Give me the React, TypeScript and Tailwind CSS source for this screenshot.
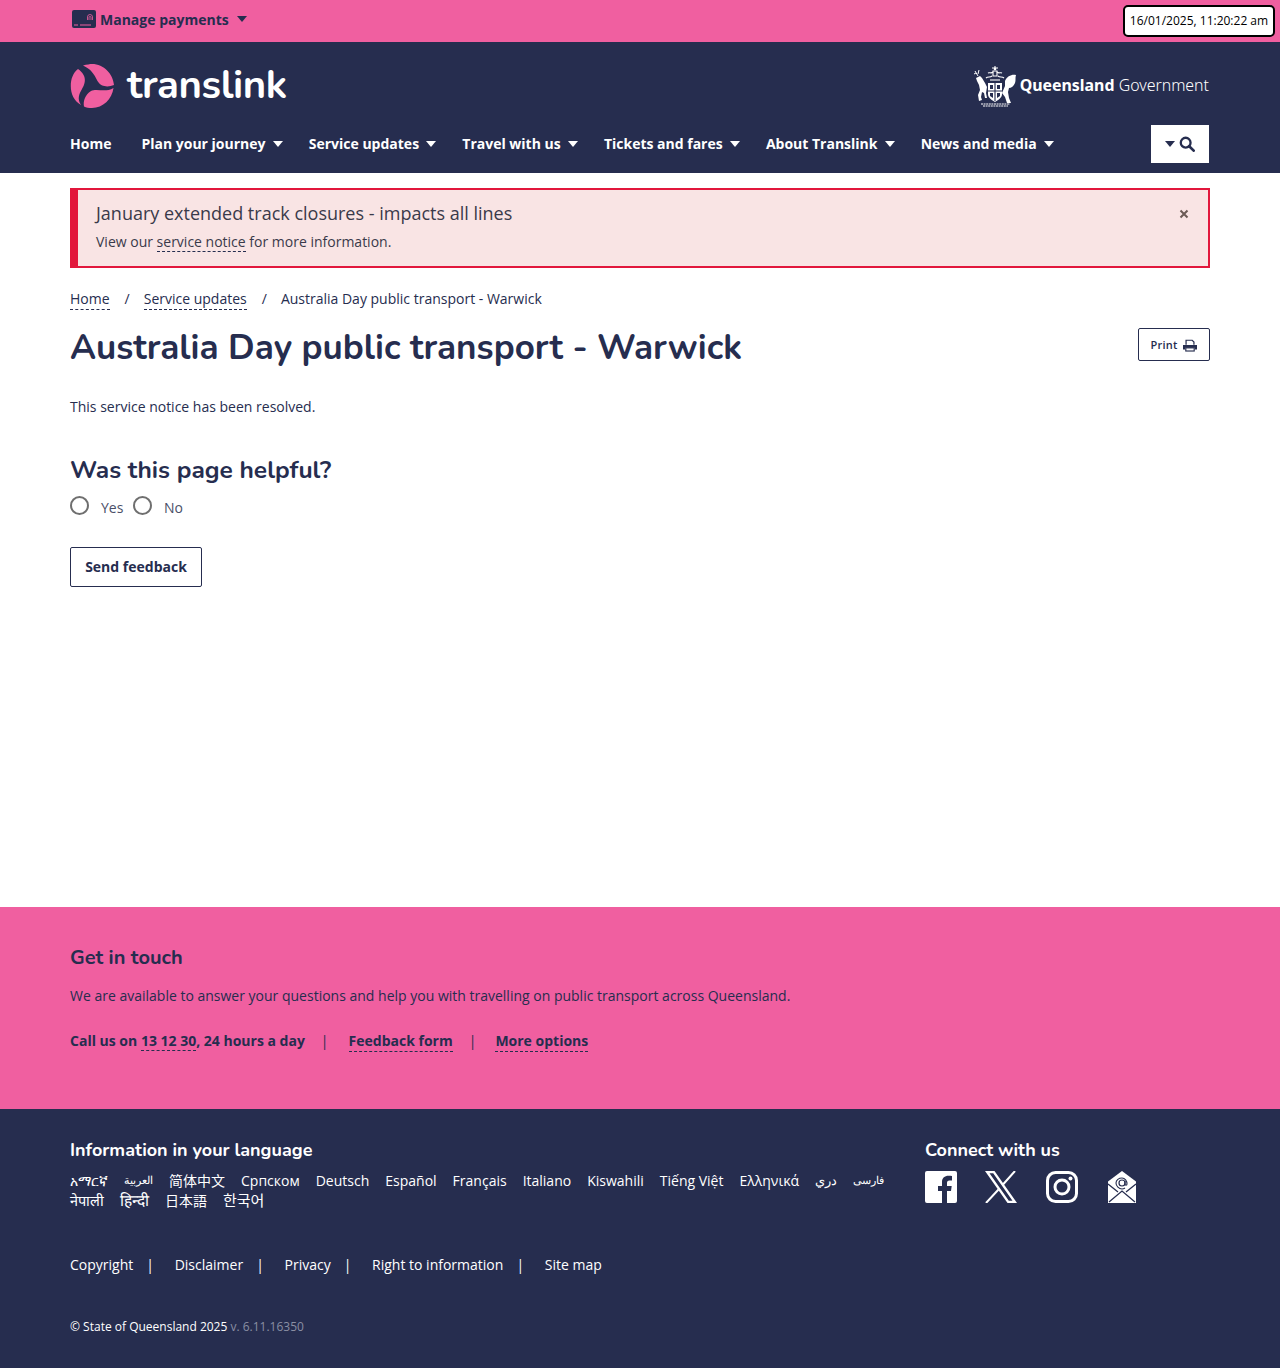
import React from 'react';

const navItems = [
  { label: 'Plan your journey' },
  { label: 'Service updates' },
  { label: 'Travel with us' },
  { label: 'Tickets and fares' },
  { label: 'About Translink' },
  { label: 'News and media' },
];

const languagesFirst = [
  { label: 'አማርኛ', size: '' },
  { label: 'العربية', size: 'text-[11px]' },
  { label: '简体中文', size: '' },
  { label: 'Српском', size: '' },
  { label: 'Deutsch', size: '' },
  { label: 'Español', size: '' },
  { label: 'Français', size: '' },
  { label: 'Italiano', size: '' },
  { label: 'Kiswahili', size: '' },
  { label: 'Tiếng Việt', size: '' },
  { label: 'Ελληνικά', size: '' },
  { label: 'دري', size: 'text-[13px]' },
  { label: 'فارسی', size: 'text-[11px]' },
];
const languagesSecond = [
  { label: 'नेपाली', size: 'text-[14.500px]' },
  { label: 'हिन्दी', size: 'text-[15.500px]' },
  { label: '日本語', size: '' },
  { label: '한국어', size: 'text-[15px]' },
];
const legalLinks = ['Copyright', 'Disclaimer', 'Privacy', 'Right to information', 'Site map'];

const Caret = ({ className }: { className: string }) => (
  <svg viewBox="0 0 10 6" className={className} aria-hidden="true">
    <path d="M0 0h10L5 6z" fill="currentColor" />
  </svg>
);

const TranslinkMark = () => (
  <svg viewBox="0 0 44 44" className="w-[44px] h-[44px]" aria-hidden="true">
    <g fill="#f05fa0">
      <path d="M13 1.500C17 .5 20 0 22 0C34 0 43 10 44 21C38 23.500 31 23 27.500 17C24 10 21 5 13 1.500z" />
      <path d="M8 5C3 9 .8 15 .8 22C.8 30 4 37 11 41C7 35 9 30 12 25C15 20 18 12 8 5z" />
      <path d="M43.500 24C42 35 33 44 22 44C19 44 16 43.500 14 42.500C13 37 15 31 21 27C27 24 35 29 43.500 24z" />
    </g>
  </svg>
);

const Crest = () => (
  <svg viewBox="0 0 44 42" className="w-[44px] h-[42px]" aria-hidden="true">
    {/* stag */}
    <path d="M3 13l4-2 2 2 3 5 2 4-1 6 1 5h-2l-1-5-2-1-1 5 1 3-3 1-1-6 2-5-1-5-2-4z" fill="#fff" />
    <path d="M5 11L2 6M5 9L6 5M3 8L1 9" stroke="#fff" strokeWidth="1" fill="none" />
    {/* lion */}
    <path d="M32 16c2-5 7-7 11-6-1 3 0 5-1 8-1 3-4 5-6 5l-1 4 1 6 2 5h-4l-2-6-3-4 3-7z" fill="#fff" />
    {/* helm and mantling */}
    <g fill="none" stroke="#fff" strokeWidth="1.100">
      <path d="M15 8c2-1 3 1 5-1M29 8c-2-1-3 1-5-1M13 13c2-2 4 0 6-2M31 13c-2-2-4 0-6-2" />
      <path d="M22 1v4M19 3h6M20 6h4v5h-4z" />
      <path d="M17 15h10" />
    </g>
    <circle cx="22" cy="4" r="1.300" fill="#fff" />
    {/* shield */}
    <path d="M15 18h14v11c0 4-4 6-7 8-3-2-7-4-7-8z" fill="#fff" />
    <path d="M22 18v18M15 26h14" stroke="#262d4f" strokeWidth="1.100" />
    <path d="M17 20h3v4h-3zM24 20h3v4h-3zM24 28h3v3l-3 2zM17 28h3v5l-3-2z" fill="#262d4f" />
    {/* motto */}
    <path d="M8 39h29M10 41h25" stroke="#fff" strokeWidth="1" fill="none" strokeDasharray="2 .6" />
  </svg>
);

const DashedLink = ({ children, className = '' }: { children: React.ReactNode; className?: string }) => (
  <a className={`border-b border-dashed border-[#262d4f] ${className}`}>{children}</a>
);

export default function App() {
  return (
    <div className="relative min-h-[1368px] bg-white text-[14px] text-[#262d4f] font-['Open_Sans',sans-serif]">
      {/* clock overlay */}
      <div className="absolute left-[1123px] top-[5px] w-[152px] h-[32px] pb-[1px] bg-white border-2 border-black rounded-[5px] flex items-center justify-center text-[12px] whitespace-nowrap text-black">
        16/01/2025, 11:20:22 am
      </div>

      <div className="h-[42px] bg-[#f05fa0]">
        <div className="w-[1140px] mx-auto pl-[2px] h-full flex items-center">
          <svg viewBox="0 0 24 18" className="w-[24px] h-[18px] mb-[4px]" aria-hidden="true">
            <rect width="24" height="18" rx="2" fill="#262d4f" />
            <path d="M2 15h4M8 15h11" stroke="#f05fa0" strokeWidth="1" />
            <path d="M15.500 10V7a2.500 2.500 0 015 0v3M17 10V7.500a1 1 0 012 0V10" stroke="#f05fa0" strokeWidth=".8" fill="none" />
          </svg>
          <span className="ml-[4px] mb-[4px] font-bold text-[#262d4f]">Manage payments</span>
          <Caret className="w-[10px] h-[6px] ml-[8px] mb-[4px] text-[#262d4f]" />
        </div>
      </div>

      <header className="h-[131px] bg-[#262d4f] text-white">
        <div className="w-[1140px] mx-auto">
          <div className="h-[83px] flex items-center justify-between pt-[5px]">
            <div className="flex items-center gap-[13px]">
              <TranslinkMark />
              <span className="font-['Nunito','Open_Sans',sans-serif] font-bold text-[40px] leading-none tracking-[-0.4px] mb-[3px]">translink</span>
            </div>
            <div className="flex items-center gap-[3px] pr-[1px]">
              <Crest />
              <span className="text-[15.900px] mb-[1px] font-['Noto_Sans',sans-serif]">
                <span className="font-bold">Queensland</span> <span className="font-light">Government</span>
              </span>
            </div>
          </div>
          <nav className="flex items-center h-[38px]">
            <a className="font-bold mr-[30px] mb-[2px]">Home</a>
            {navItems.map((item) => (
              <a key={item.label} className="flex items-center font-bold mr-[26.200px] mb-[2px]">
                {item.label}
                <Caret className="w-[10px] h-[6px] ml-[7px] mt-[1px]" />
              </a>
            ))}
            <button className="ml-auto mr-[1px] w-[58px] h-[38px] bg-white text-[#262d4f] flex items-center justify-center gap-[4px]">
              <Caret className="w-[10px] h-[6px]" />
              <svg viewBox="0 0 18 18" className="w-[16px] h-[16px]" aria-hidden="true">
                <circle cx="7.500" cy="7.500" r="5.500" fill="none" stroke="currentColor" strokeWidth="2.600" />
                <path d="M11.500 11.500L16.500 16.500" stroke="currentColor" strokeWidth="3" strokeLinecap="round" />
              </svg>
            </button>
          </nav>
        </div>
      </header>

      <main className="w-[1140px] mx-auto h-[734px] pt-[15px]">
        <div className="h-[80px] bg-[#f9e4e4] border-2 border-l-[8px] border-[#e2173c] pl-[18px] pr-[19px] flex justify-between text-[#3a3a4a]">
          <div>
            <p className="text-[18px] leading-[26px] pt-[10px]">January extended track closures - impacts all lines</p>
            <p className="mt-[6px] leading-[20px]">
              View our <DashedLink>service notice</DashedLink> for more information.
            </p>
          </div>
          <svg viewBox="0 0 10 10" className="w-[10px] h-[10px] mt-[19px] text-[#6b5a55]" aria-hidden="true">
            <path d="M1.500 1.500l7 7M8.500 1.500l-7 7" stroke="currentColor" strokeWidth="2" />
          </svg>
        </div>

        <div className="mt-[20px] flex items-baseline h-[20px]">
          <DashedLink>Home</DashedLink>
          <span className="ml-[15px] mr-[14px]">/</span>
          <DashedLink>Service updates</DashedLink>
          <span className="ml-[15px] mr-[14px]">/</span>
          <span>Australia Day public transport - Warwick</span>
        </div>

        <div className="flex justify-between items-start">
          <h1 className="mt-[17px] font-['Nunito','Noto_Sans',sans-serif] font-bold text-[35px] leading-[46px]">Australia Day public transport - Warwick</h1>
          <button className="mt-[20px] w-[72px] h-[33px] pt-[1px] border border-[#262d4f] rounded-[2px] flex items-center justify-center gap-[6px] text-[11px] tracking-[0.2px] font-semibold">
            Print
            <svg viewBox="0 0 16 14" className="w-[14px] h-[13px]" aria-hidden="true">
              <path d="M3.500 6V1h7l2 2v3" fill="none" stroke="currentColor" strokeWidth="1.400" />
              <path d="M0 6.500h16v5h-2.500v-2h-11v2H0z" fill="currentColor" />
              <rect x="3.200" y="9.700" width="9.600" height="3.600" fill="none" stroke="currentColor" strokeWidth="1.300" />
            </svg>
          </button>
        </div>

        <p className="mt-[26px] leading-[20px]">This service notice has been resolved.</p>

        <h2 className="mt-[37px] font-['Nunito','Noto_Sans',sans-serif] font-bold text-[24.500px] leading-[32px]">Was this page helpful?</h2>

        <div className="mt-[7px] flex items-start h-[28px]">
          <span className="w-[19px] h-[19px] rounded-full border-2 border-[#6f6f6f] mt-[3px]" />
          <span className="ml-[12px] mt-[5px] leading-[20px] mr-[9.500px] text-[#4a4f68]">Yes</span>
          <span className="w-[19px] h-[19px] rounded-full border-2 border-[#6f6f6f] mt-[3px]" />
          <span className="ml-[12px] mt-[5px] leading-[20px] text-[#4a4f68]">No</span>
        </div>

        <button className="mt-[26px] w-[132px] h-[40px] pb-[2px] border border-[#262d4f] rounded-[2px] font-bold text-[14px]">Send feedback</button>
      </main>

      <section className="h-[202px] bg-[#f05fa0] text-[#262d4f]">
        <div className="w-[1140px] mx-auto pt-[37px]">
          <h2 className="font-['Nunito','Noto_Sans',sans-serif] font-bold text-[20px] leading-[28px]">Get in touch</h2>
          <p className="mt-[14px] leading-[20px]">We are available to answer your questions and help you with travelling on public transport across Queensland.</p>
          <div className="mt-[25px] flex items-baseline font-bold leading-[20px]">
            <span>
              Call us on <DashedLink>13 12 30</DashedLink>, 24 hours a day
            </span>
            <span className="ml-[16px] mr-[20px] font-normal">|</span>
            <DashedLink>Feedback form</DashedLink>
            <span className="ml-[16px] mr-[19px] font-normal">|</span>
            <DashedLink>More options</DashedLink>
          </div>
        </div>
      </section>

      <footer className="h-[259px] bg-[#262d4f] text-white">
        <div className="w-[1140px] mx-auto pt-[28px]">
          <div className="flex">
            <div className="w-[855px]">
              <h2 className="font-['Nunito','Noto_Sans',sans-serif] font-bold text-[18px] leading-[26px]">Information in your language</h2>
              <div className="mt-[7px] flex gap-x-[16px] h-[21px] items-center whitespace-nowrap font-['Open_Sans','Noto_Sans_CJK_SC',sans-serif]">
                {languagesFirst.map((lang) => (
                  <a key={lang.label} className={lang.size}>{lang.label}</a>
                ))}
              </div>
              <div className="flex gap-x-[16px] h-[19px] items-baseline whitespace-nowrap font-['Open_Sans','Noto_Sans_CJK_JP','Noto_Sans_CJK_KR',sans-serif] leading-[18px]">
                {languagesSecond.map((lang) => (
                  <a key={lang.label} className={lang.size}>{lang.label}</a>
                ))}
              </div>
            </div>
            <div>
              <h2 className="font-['Nunito','Noto_Sans',sans-serif] font-bold text-[18px] leading-[26px]">Connect with us</h2>
              <div className="mt-[8px] flex items-center">
                <svg viewBox="0 0 32 32" className="w-[32px] h-[32px]" aria-hidden="true">
                  <path d="M2 0h28a2 2 0 012 2v28a2 2 0 01-2 2h-8V20h4l.7-5H22v-3c0-1.500.6-2.500 2.500-2.500H27V5c-1-.2-2.200-.3-3.600-.3-3.600 0-6.400 2.200-6.400 6.300v4h-4v5h4v12H2a2 2 0 01-2-2V2a2 2 0 012-2z" fill="#fff" />
                </svg>
                <svg viewBox="0 0 32 32" className="w-[32px] h-[32px] ml-[28px]" aria-hidden="true">
                  <path d="M0 0h9.500L32 32h-9.500zM4.500 2.200L23.800 29.800h3.700L8.200 2.200z" fill="#fff" fillRule="evenodd" />
                  <path d="M30 0L18 13.500M13.500 18.500L1 32" stroke="#fff" strokeWidth="2" fill="none" />
                </svg>
                <svg viewBox="0 0 32 32" className="w-[32px] h-[32px] ml-[29px]" aria-hidden="true">
                  <rect x="1.500" y="1.500" width="29" height="29" rx="8" fill="none" stroke="#fff" strokeWidth="3" />
                  <circle cx="16" cy="16" r="7" fill="none" stroke="#fff" strokeWidth="3" />
                  <circle cx="24.500" cy="7.500" r="2" fill="#fff" />
                </svg>
                <svg viewBox="0 0 30 32" className="w-[30px] h-[32px] ml-[29px]" aria-hidden="true">
                  <path d="M15 0l14 10.500V32H1V10.500z" fill="#fff" />
                  <path d="M1 13l10 8M29 13l-10 8M2 31l13-11 13 11" fill="none" stroke="#262d4f" strokeWidth="1.300" />
                  <circle cx="15" cy="12" r="3" fill="none" stroke="#262d4f" strokeWidth="1.200" />
                  <path d="M18 10v3c0 1.500 2 1.500 2 0 0-3-2-6-5-6s-6 2-6 5 3 6 6 6c1 0 2-.3 3-1" fill="none" stroke="#262d4f" strokeWidth="1.100" />
                </svg>
              </div>
            </div>
          </div>

          <div className="mt-[44px] flex items-center h-[20px]">
            {legalLinks.map((link, idx) => (
              <React.Fragment key={link}>
                <a>{link}</a>
                {idx < legalLinks.length - 1 && <span className="ml-[13px] mr-[20.700px]">|</span>}
              </React.Fragment>
            ))}
          </div>

          <p className="mt-[43px] text-[12px] leading-[20px]">
            © State of Queensland 2025 <span className="text-[#8a8fa3]">v. 6.11.16350</span>
          </p>
        </div>
      </footer>
    </div>
  );
}
